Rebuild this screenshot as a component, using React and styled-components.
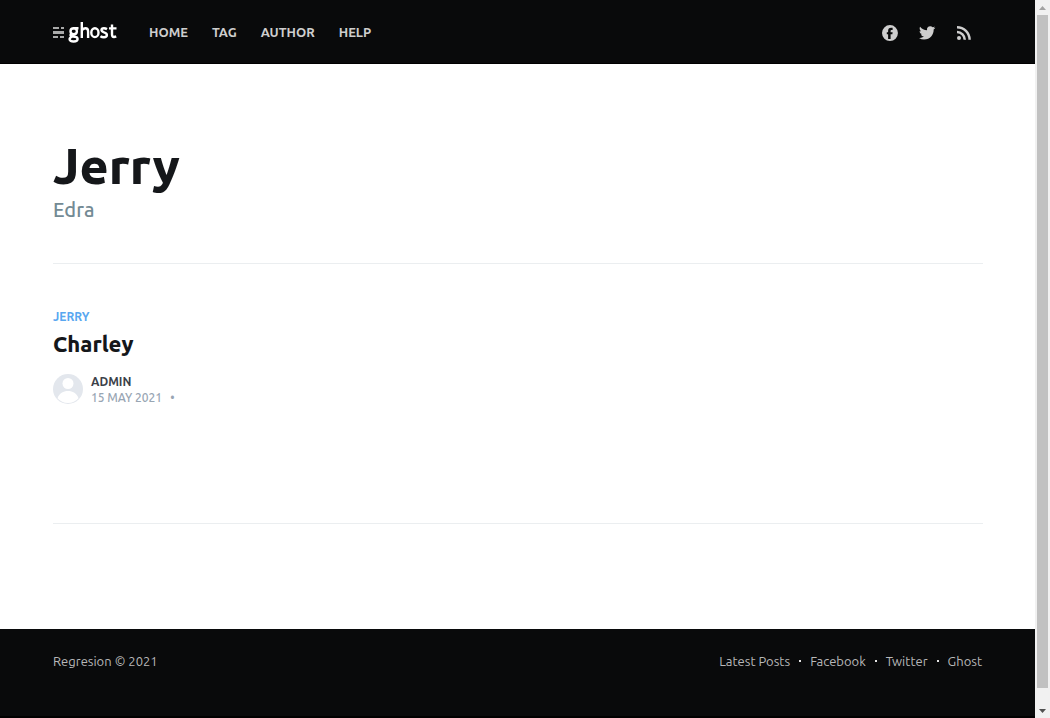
import React from "react";
import styled, { createGlobalStyle } from "styled-components";

const GlobalStyle = createGlobalStyle`
  *, *::before, *::after { box-sizing: border-box; }
  body {
    margin: 0;
    background: #fff;
    color: #15171a;
    font-family: Ubuntu, "Noto Sans", "Open Sans", sans-serif;
    font-size: 13px;
    line-height: 16px;
  }
  a { color: inherit; text-decoration: none; }
  h1, h2, p { margin: 0; }
`;

const Window = styled.div`
  display: grid;
  grid-template-columns: minmax(0, 1fr) 15px;
  height: 100vh;
  overflow: hidden;
`;

const Page = styled.div`
  display: flex;
  flex-direction: column;
  min-height: 100vh;
`;

const Header = styled.header`
  display: flex;
  flex-shrink: 0;
  align-items: center;
  height: 64px;
  padding: 1px 52px 0 53px;
  background: #090a0b;
  border-bottom: 1px solid #000;
`;

const Logo = styled.a`
  display: flex;
  margin-right: 32px;
`;

const Nav = styled.nav`
  display: flex;
  flex: 1;
  gap: 24px;
  color: #cecece;
  font-weight: 600;
  text-transform: uppercase;
`;

const Social = styled.div`
  display: flex;
`;

const SocialLink = styled.a`
  display: flex;
  padding: 11px 10px 10px;
  color: #cecece;
`;

const Main = styled.main`
  flex: 1;
  padding: 70px 52px 105px 53px;
`;

const TagHeader = styled.div`
  height: 129px;
`;

const Title = styled.h1`
  font-size: 50px;
  line-height: 62px;
  font-weight: 800;
`;

const Subtitle = styled.p`
  color: #738a94;
  font-size: 20px;
  line-height: 28px;
  font-weight: 500;
`;

const Feed = styled.div`
  min-height: 261px;
  padding-top: 45px;
  border-top: 1px solid #ebeef0;
  border-bottom: 1px solid #ebeef0;
`;

const PostTag = styled.a`
  display: block;
  color: #58a7f0;
  font-size: 12px;
  font-weight: 600;
  text-transform: uppercase;
`;

const PostTitle = styled.h2`
  padding: 4px 0 16px;
  font-size: 22px;
  line-height: 29px;
  font-weight: 800;
`;

const Byline = styled.div`
  display: flex;
  align-items: flex-start;
  gap: 8px;
  font-size: 12px;
  text-transform: uppercase;
`;

const Author = styled.a`
  display: block;
  color: #3b4149;
  font-weight: 700;
`;

const PostDate = styled.p`
  display: flex;
  gap: 8px;
  color: #98a5b3;
  font-weight: 500;
`;

const Footer = styled.footer`
  display: flex;
  flex-shrink: 0;
  align-items: flex-start;
  justify-content: space-between;
  min-height: 89px;
  padding: 24px 53px;
  background: #090a0b;
  border-bottom: 2px solid #000;
  color: #b8b8b9;
`;

const FooterNav = styled.nav`
  display: flex;
`;

const FooterLink = styled.a`
  display: flex;
  align-items: center;

  & + &::before {
    content: "";
    width: 2px;
    height: 2px;
    margin: 0 9px;
    background: #e4e4e4;
  }
`;

const Scrollbar = styled.div`
  display: flex;
  flex-direction: column;
  height: 100vh;
  background: #f1f1f1;
`;

const ScrollArrow = styled.div`
  display: flex;
  align-items: center;
  justify-content: center;
  height: 15px;
`;

const Thumb = styled.div`
  flex: 1;
  margin: 0 2px 15px;
  background: #c1c1c1;
`;

const GhostLogo = () => (
  <svg width="64" height="24" viewBox="0 0 64 24" role="img" aria-label="Ghost">
    <g fill="#a9aaaa">
      <path d="M0 7h6v2H0zM8 7h3v2H8zM0 16h5v2H0zM7 16h4v2H7z" />
      <path d="M0 11h11v3H0z" />
    </g>
    <g fill="none" stroke="#fff" strokeWidth="2.4">
      <path d="M25.500 8.300h-4.600c-2.200 0-3.400 1.200-3.400 2.900s1.200 3 3.200 3 3.200-1.200 3.200-3-1.200-2.900-3.200-2.900M18.500 13.800c-1.400.700-1.500 2.400.300 2.600l3 .300c1.800.200 2.800 1 2.800 2.300 0 1.600-1.600 2.500-4 2.500s-4-.800-4-2.300c0-1.200 1-2 2.200-2.400" />
      <path d="M28.800 2v16M28.800 10.300c1.200-1.400 2.300-2 3.600-2 1.800 0 2.700 1.100 2.700 3.200V18" />
      <ellipse cx="41.900" cy="12.700" rx="3.600" ry="4.400" />
      <path d="M54 9.100c-1-.600-2-.900-3.100-.900-1.500 0-2.400.700-2.400 1.800 0 1.200 1 1.800 2.600 2.400 1.900.600 2.800 1.400 2.800 2.700 0 1.400-1.200 2.200-3 2.200-1.400 0-2.600-.400-3.500-1" />
      <path d="M59 4.600v9.600c0 2 .600 2.800 2 2.800.700 0 1.400-.200 2.200-.600M56 8.400h7.500" />
    </g>
  </svg>
);

const FacebookIcon = () => (
  <svg width="17" height="17" viewBox="0 -1.500 32 32" fill="currentColor" aria-hidden="true">
    <path d="M15 0.500a15 15 0 1 0 0 30 15 15 0 0 0 0-30zm5 9.500h-2.500c-1 0-1.300.600-1.300 1.500v2.500h3.800l-.500 4h-3.300v8.500h-4.700v-8.500H9v-4h2.500v-3C11.500 7.500 13.400 5.500 17 5.500h3z" />
  </svg>
);

const TwitterIcon = () => (
  <svg width="17" height="17" viewBox="0 -1 25 25" fill="currentColor" aria-hidden="true">
    <path d="M23.950 4.570a10 10 0 0 1-2.820.770 4.960 4.960 0 0 0 2.160-2.720c-.950.550-2 .950-3.130 1.180a4.920 4.920 0 0 0-8.380 4.480C7.690 8.090 4.070 6.130 1.640 3.160a4.820 4.820 0 0 0-.670 2.480c0 1.710.870 3.210 2.190 4.100a4.900 4.900 0 0 1-2.230-.620v.060a4.920 4.920 0 0 0 3.950 4.830 5 5 0 0 1-2.210.080 4.940 4.940 0 0 0 4.600 3.420A9.870 9.870 0 0 1 0 19.540a13.990 13.990 0 0 0 7.560 2.210c9.050 0 14-7.500 14-13.980 0-.210 0-.420-.020-.630a9.940 9.940 0 0 0 2.460-2.550z" />
  </svg>
);

const RssIcon = () => (
  <svg width="17" height="17" viewBox="0 -1 17 17" fill="none" stroke="currentColor" strokeWidth="2.5" aria-hidden="true">
    <circle cx="3" cy="13" r="2" fill="currentColor" stroke="none" />
    <path d="M1 7a7.800 7.800 0 0 1 7.800 7.800M1 2.200a12.600 12.600 0 0 1 12.600 12.600" />
  </svg>
);

const Avatar = () => (
  <svg width="30" height="30" viewBox="0 0 30 30" aria-hidden="true">
    <circle cx="15" cy="15" r="15" fill="#e3e7ed" />
    <circle cx="15" cy="9.500" r="5.500" fill="#fff" />
    <path d="M4.500 24.200C6.300 19.500 10.200 17 15 17s8.700 2.500 10.500 7.200A14.200 14.200 0 0 1 15 29a14.200 14.200 0 0 1-10.500-4.800z" fill="#fff" />
  </svg>
);

const navItems = ["Home", "Tag", "Author", "Help"];
const footerItems = ["Latest Posts", "Facebook", "Twitter", "Ghost"];

export default function App() {
  return (
    <>
      <GlobalStyle />
      <Window>
        <Page>
          <Header>
            <Logo href="#"><GhostLogo /></Logo>
            <Nav aria-label="Main">
              {navItems.map((item) => <a key={item} href="#">{item}</a>)}
            </Nav>
            <Social>
              <SocialLink href="#" aria-label="Facebook"><FacebookIcon /></SocialLink>
              <SocialLink href="#" aria-label="Twitter"><TwitterIcon /></SocialLink>
              <SocialLink href="#" aria-label="RSS"><RssIcon /></SocialLink>
            </Social>
          </Header>
          <Main>
            <TagHeader>
              <Title>Jerry</Title>
              <Subtitle>Edra</Subtitle>
            </TagHeader>
            <Feed>
              <article>
                <PostTag href="#">Jerry</PostTag>
                <PostTitle><a href="#">Charley</a></PostTitle>
                <Byline>
                  <Avatar />
                  <div>
                    <Author href="#">Admin</Author>
                    <PostDate><time dateTime="2021-05-15">15 May 2021</time><span>•</span></PostDate>
                  </div>
                </Byline>
              </article>
            </Feed>
          </Main>
          <Footer>
            <section><a href="#">Regresion</a> © 2021</section>
            <FooterNav aria-label="Footer">
              {footerItems.map((item) => <FooterLink key={item} href="#">{item}</FooterLink>)}
            </FooterNav>
          </Footer>
        </Page>
        <Scrollbar aria-hidden="true">
          <ScrollArrow>
            <svg width="7" height="4" viewBox="0 0 7 4" fill="#a3a3a3"><path d="M0 4L3.500 0 7 4z" /></svg>
          </ScrollArrow>
          <Thumb />
          <ScrollArrow>
            <svg width="7" height="4" viewBox="0 0 7 4" fill="#505050"><path d="M0 0h7L3.500 4z" /></svg>
          </ScrollArrow>
        </Scrollbar>
      </Window>
    </>
  );
}
